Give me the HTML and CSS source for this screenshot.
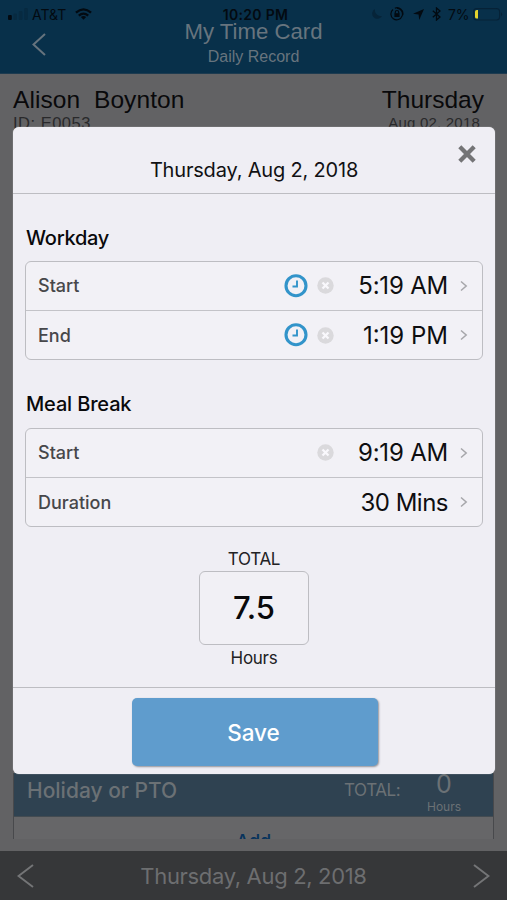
FILE: index.html
```html
<!DOCTYPE html>
<html lang="en">
<head>
<meta charset="utf-8">
<title>My Time Card</title>
<link rel="stylesheet" href="styles.css">
</head>
<body>
<div class="page">
  <header class="topbar">
    <div class="status">
      <div class="status-left">
        <svg class="signal" width="20" height="12" viewBox="0 0 20 12"><rect x="0" y="7" width="3.8" height="5" rx="1" fill="#030a11"/><g fill="#072a41"><rect x="5.4" y="5.5" width="3.6" height="6.5" rx="1"/><rect x="10.8" y="3" width="3.6" height="9" rx="1"/><rect x="16.2" y="0" width="3.6" height="12" rx="1"/></g></svg>
        <span class="carrier">AT&amp;T</span>
        <svg class="wifi" width="17" height="12" viewBox="0 0 18 12" fill="none" stroke="#030a11"><path d="M1 4.6Q9-2.4 17 4.6" stroke-width="2.5"/><path d="M4 7.7Q9 3.3 14 7.7" stroke-width="2.3"/><path d="M9 12L6.2 9.2Q9 7 11.8 9.2Z" fill="#030a11" stroke="none"/></svg>
      </div>
      <span class="clock">10:20 PM</span>
      <div class="status-right">
        <svg width="12" height="12" viewBox="0 0 12 12"><path d="M4 1A6 6 0 0 0 11 8A5.2 5.2 0 1 1 4 1Z" fill="#062439"/></svg>
        <svg class="lock" width="14" height="14" viewBox="0 0 14 14" fill="none" stroke="#030a11" stroke-width="1.2"><path d="M3 2.5A5.8 5.8 0 1 0 7 1.2"/><path d="M4.8 1.2A5.8 5.8 0 0 1 12.7 8"/><path d="M5.3 6.5V5.2a1.7 1.7 0 0 1 3.4 0V6.5"/><rect x="4.4" y="6.2" width="5.2" height="3.8" fill="#030a11" stroke="none"/></svg>
        <svg class="arrow" width="11" height="11" viewBox="0 0 11 11"><path d="M11 0L6.2 11L5.6 5.4L0 4.8Z" fill="#030a11"/></svg>
        <svg class="bt" width="9" height="14" viewBox="0 0 9 14" fill="none" stroke="#030a11" stroke-width="1.3"><path d="M.8 3.8L8 10L4.5 13V1L8 4L.8 10.2"/></svg>
        <span class="percent">7%</span>
        <svg class="battery" width="30" height="13" viewBox="0 0 30 13"><rect x=".6" y=".6" width="26" height="11.4" rx="3" fill="none" stroke="#062237" stroke-width="1.1"/><path d="M28 4.2q2.2 2.1 0 4.2Z" fill="#062237"/><path d="M3.8 2H5V10.6H3.8Q2 10.6 2 9V3.6Q2 2 3.8 2Z" fill="#e3d32d"/></svg>
      </div>
    </div>
    <div class="nav">
      <svg class="back" width="14" height="23" viewBox="0 0 14 23"><path d="M13 1L1.5 11.5L13 22" fill="none" stroke="#66737d" stroke-width="2"/></svg>
      <div class="nav-title"><span class="app-title">My Time Card</span><span class="app-sub">Daily Record</span></div>
    </div>
  </header>
  <main class="content">
    <div class="person">
      <div><span class="big name">Alison&nbsp; Boynton</span><span class="small id">ID: E0053</span></div>
      <div class="right"><span class="big day">Thursday</span><span class="small date">Aug 02, 2018</span></div>
    </div>
    <section class="card">
      <div class="pto">
        <span class="pto-name">Holiday or PTO</span>
        <span class="pto-total">TOTAL:</span>
        <div class="pto-hours"><span class="zero">0</span><span class="unit">Hours</span></div>
      </div>
      <div class="add"><span>Add</span></div>
    </section>
  </main>
  <footer class="datebar">
    <svg width="17" height="24" viewBox="0 0 17 24"><path d="M16 1L1.5 12L16 23" fill="none" stroke="#747577" stroke-width="2"/></svg>
    <span class="foot-date">Thursday, Aug 2, 2018</span>
    <svg width="17" height="24" viewBox="0 0 17 24"><path d="M1 1L15.5 12L1 23" fill="none" stroke="#747577" stroke-width="2"/></svg>
  </footer>

  <div class="modal">
    <div class="modal-head">
      <span class="modal-title">Thursday, Aug 2, 2018</span>
      <svg class="close" width="18" height="18" viewBox="0 0 18 18"><path d="M1.8 1.8L16.2 16.2M16.2 1.8L1.8 16.2" stroke="#747476" stroke-width="4.3"/></svg>
    </div>
    <div class="modal-body">
      <h2 class="workday">Workday</h2>
      <div class="group">
        <div class="row"><span class="label">Start</span>
          <svg class="time" width="24" height="24" viewBox="0 0 24 24" fill="none" stroke="#3294ca"><circle cx="12" cy="11.7" r="10" stroke-width="3.1"/><path d="M13 6.5V12.5H8.5" stroke-width="1.9"/></svg>
          <svg class="clear" width="17" height="17" viewBox="0 0 17 17"><circle cx="8.5" cy="8.5" r="8.2" fill="#dad9dc"/><path d="M5.5 5.5l6 6M11.5 5.5l-6 6" stroke="#f9f8fc" stroke-width="2.3"/></svg>
          <span class="value am">5:19 AM</span>
          <svg class="chev" width="8" height="12" viewBox="0 0 8 12"><path d="M1 1.5L6.2 6L1 10.5" fill="none" stroke="#a6a6aa" stroke-width="1.5"/></svg></div>
        <div class="row"><span class="label">End</span>
          <svg class="time" width="24" height="24" viewBox="0 0 24 24" fill="none" stroke="#3294ca"><circle cx="12" cy="11.7" r="10" stroke-width="3.1"/><path d="M13 6.5V12.5H8.5" stroke-width="1.9"/></svg>
          <svg class="clear" width="17" height="17" viewBox="0 0 17 17"><circle cx="8.5" cy="8.5" r="8.2" fill="#dad9dc"/><path d="M5.5 5.5l6 6M11.5 5.5l-6 6" stroke="#f9f8fc" stroke-width="2.3"/></svg>
          <span class="value">1:19 PM</span>
          <svg class="chev" width="8" height="12" viewBox="0 0 8 12"><path d="M1 1.5L6.2 6L1 10.5" fill="none" stroke="#a6a6aa" stroke-width="1.5"/></svg></div>
      </div>
      <h2 class="meal">Meal Break</h2>
      <div class="group">
        <div class="row"><span class="label">Start</span>
          <svg class="clear" width="17" height="17" viewBox="0 0 17 17"><circle cx="8.5" cy="8.5" r="8.2" fill="#dad9dc"/><path d="M5.5 5.5l6 6M11.5 5.5l-6 6" stroke="#f9f8fc" stroke-width="2.3"/></svg>
          <span class="value am">9:19 AM</span>
          <svg class="chev" width="8" height="12" viewBox="0 0 8 12"><path d="M1 1.5L6.2 6L1 10.5" fill="none" stroke="#a6a6aa" stroke-width="1.5"/></svg></div>
        <div class="row"><span class="label">Duration</span>
          <span class="value mins">30 Mins</span>
          <svg class="chev" width="8" height="12" viewBox="0 0 8 12"><path d="M1 1.5L6.2 6L1 10.5" fill="none" stroke="#a6a6aa" stroke-width="1.5"/></svg></div>
      </div>
      <div class="total">
        <span class="total-label">TOTAL</span>
        <div class="total-box"><span>7.5</span></div>
        <span class="total-unit">Hours</span>
      </div>
    </div>
    <div class="modal-foot"><button class="save"><span>Save</span></button></div>
  </div>
</div>
</body>
</html>
```
FILE: styles.css
```css
* { box-sizing: border-box; }
body { margin: 0; font-family: Inter, "Liberation Sans", sans-serif; }
span { white-space: nowrap; }
svg { display: block; flex: none; }
.page { position: relative; width: 507px; height: 900px; overflow: hidden; background: #626264; display: flex; flex-direction: column; }

.topbar { height: 74px; flex: none; background: #08304a; border-bottom: 1px solid #1d3b50; }
.status { height: 20px; display: grid; grid-template-columns: 1fr auto 1fr; align-items: center; padding: 7px 4px 0 8px; color: #030a11; font-size: 14px; line-height: 13px; }
.status-left, .status-right { display: flex; align-items: center; }
.status-right { justify-content: flex-end; }
.carrier { margin-left: 4px; width: 36px; }
.wifi { margin-left: 7px; }
.clock { font-weight: 600; letter-spacing: .3px; }
.lock { margin-left: 7px; }
.arrow { margin-left: 9px; }
.bt { margin-left: 8px; }
.percent { margin-left: 7px; width: 22px; letter-spacing: -.2px; }
.battery { margin-left: 3px; }
.nav { height: 53px; position: relative; display: flex; justify-content: center; font-family: "Liberation Sans", Arial, sans-serif; color: #67747e; }
.back { position: absolute; left: 32px; top: 13px; }
.nav-title { display: flex; flex-direction: column; align-items: center; }
.app-title { font-size: 22.2px; line-height: 23px; }
.app-sub { font-size: 16px; line-height: 20px; margin-top: 4px; }

.content { height: 777px; flex: none; padding: 0 13px; font-family: "Liberation Sans", Arial, sans-serif; display: flex; flex-direction: column; }
.person { height: 699px; flex: none; display: flex; justify-content: space-between; padding: 12px 10px 0 0; color: #09090b; }
.person span { display: block; }
.right { text-align: right; }
.big { font-size: 24.5px; line-height: 28px; }
.name { letter-spacing: .08px; }
.small { line-height: 18px; color: #29292b; }
.id { font-size: 16.5px; letter-spacing: .5px; }
.date { padding-right: 4px; font-size: 15px; letter-spacing: .2px; }
.card { height: 66px; border: solid #48494c; border-width: 0 1px; overflow: hidden; display: flex; flex-direction: column; color: #6b7175; }
.pto { height: 44px; flex: none; display: flex; background: #2f4251; border-bottom: 1px solid #434b51; padding-left: 13px; font-family: Inter, sans-serif; }
.pto-name { width: 317px; font-size: 21px; line-height: 35px; font-weight: 500; }
.pto-total { width: 77px; font-size: 17px; line-height: 34px; letter-spacing: -.4px; }
.pto-hours { width: 46px; display: flex; flex-direction: column; align-items: center; }
.zero { font-size: 25px; line-height: 22px; }
.unit { font-size: 12px; line-height: 19px; margin-top: 2px; }
.add { text-align: center; color: #07335c; font: 500 18.5px/28px Inter, sans-serif; letter-spacing: -.3px; padding-top: 10px; background: #666668; height: 40px; flex: none; }

.datebar { height: 49px; flex: none; display: flex; align-items: center; justify-content: space-between; padding: 0 17px; background: #363739; color: #6d6e70; font-size: 22px; letter-spacing: -.33px; }

.modal { position: absolute; left: 13px; top: 127px; width: 482px; height: 647px; background: #efeef4; border-radius: 6px; display: flex; flex-direction: column; color: #111113; box-shadow: 0 0 1px #ddd; }
.modal-head { height: 67px; flex: none; border-bottom: 1px solid #bdbdc2; text-align: center; padding-top: 29px; font-size: 20px; line-height: 28px; letter-spacing: -.18px; position: relative; }
.close { position: absolute; right: 19px; top: 18px; }
.modal-body { height: 494px; flex: none; padding: 0 12px; border-bottom: 1px solid #bdbdc2; }
h2 { margin: 0; padding-left: 1px; font-size: 20px; font-weight: 500; line-height: 28px; color: #09090b; }
.workday { margin-top: 30px; letter-spacing: -.25px; }
.meal { margin-top: 30px; letter-spacing: -.15px; }
.group { margin-top: 9px; height: 99px; border: 1.5px solid #bdbdc2; border-radius: 6px; background: #f2f1f6; display: flex; flex-direction: column; }
.meal + .group { margin-top: 10px; }
.row { flex: 1; display: flex; align-items: center; padding: 0 14px 0 12px; }
.row + .row { border-top: 1.5px solid #c3c3c8; padding-top: 1px; }
.label { margin-right: auto; font-size: 18px; font-weight: 500; color: #47474a; }
.clear { margin-left: 9px; margin-right: .5px; }
.value { width: 114px; text-align: right; font-size: 24px; color: #0e0e10; }
.am { letter-spacing: -.2px; }
.mins { letter-spacing: -.5px; }
.chev { margin-left: 12px; }
.total { display: flex; flex-direction: column; align-items: center; margin-top: 21px; font-size: 17px; line-height: 22px; letter-spacing: -.3px; color: #222224; }
.total-box { margin: 1px 0 2px; width: 110px; height: 74px; border: 1.5px solid #bdbdc2; border-radius: 6px; background: #f1f0f5; display: flex; align-items: center; justify-content: center; font-size: 31px; font-weight: 500; letter-spacing: 0; color: #09090b; }
.modal-foot { flex: 1; display: flex; justify-content: center; align-items: flex-start; padding: 10px 0 0 1px; }
.save { width: 246px; height: 68px; border: 0; border-radius: 5px; background: #5f9ccd; color: #fff; font: 500 22.5px/30px Inter, sans-serif; letter-spacing: -.1px; padding: 2px 2px 0 0; box-shadow: 1px 1px 2px #929299; }
```
